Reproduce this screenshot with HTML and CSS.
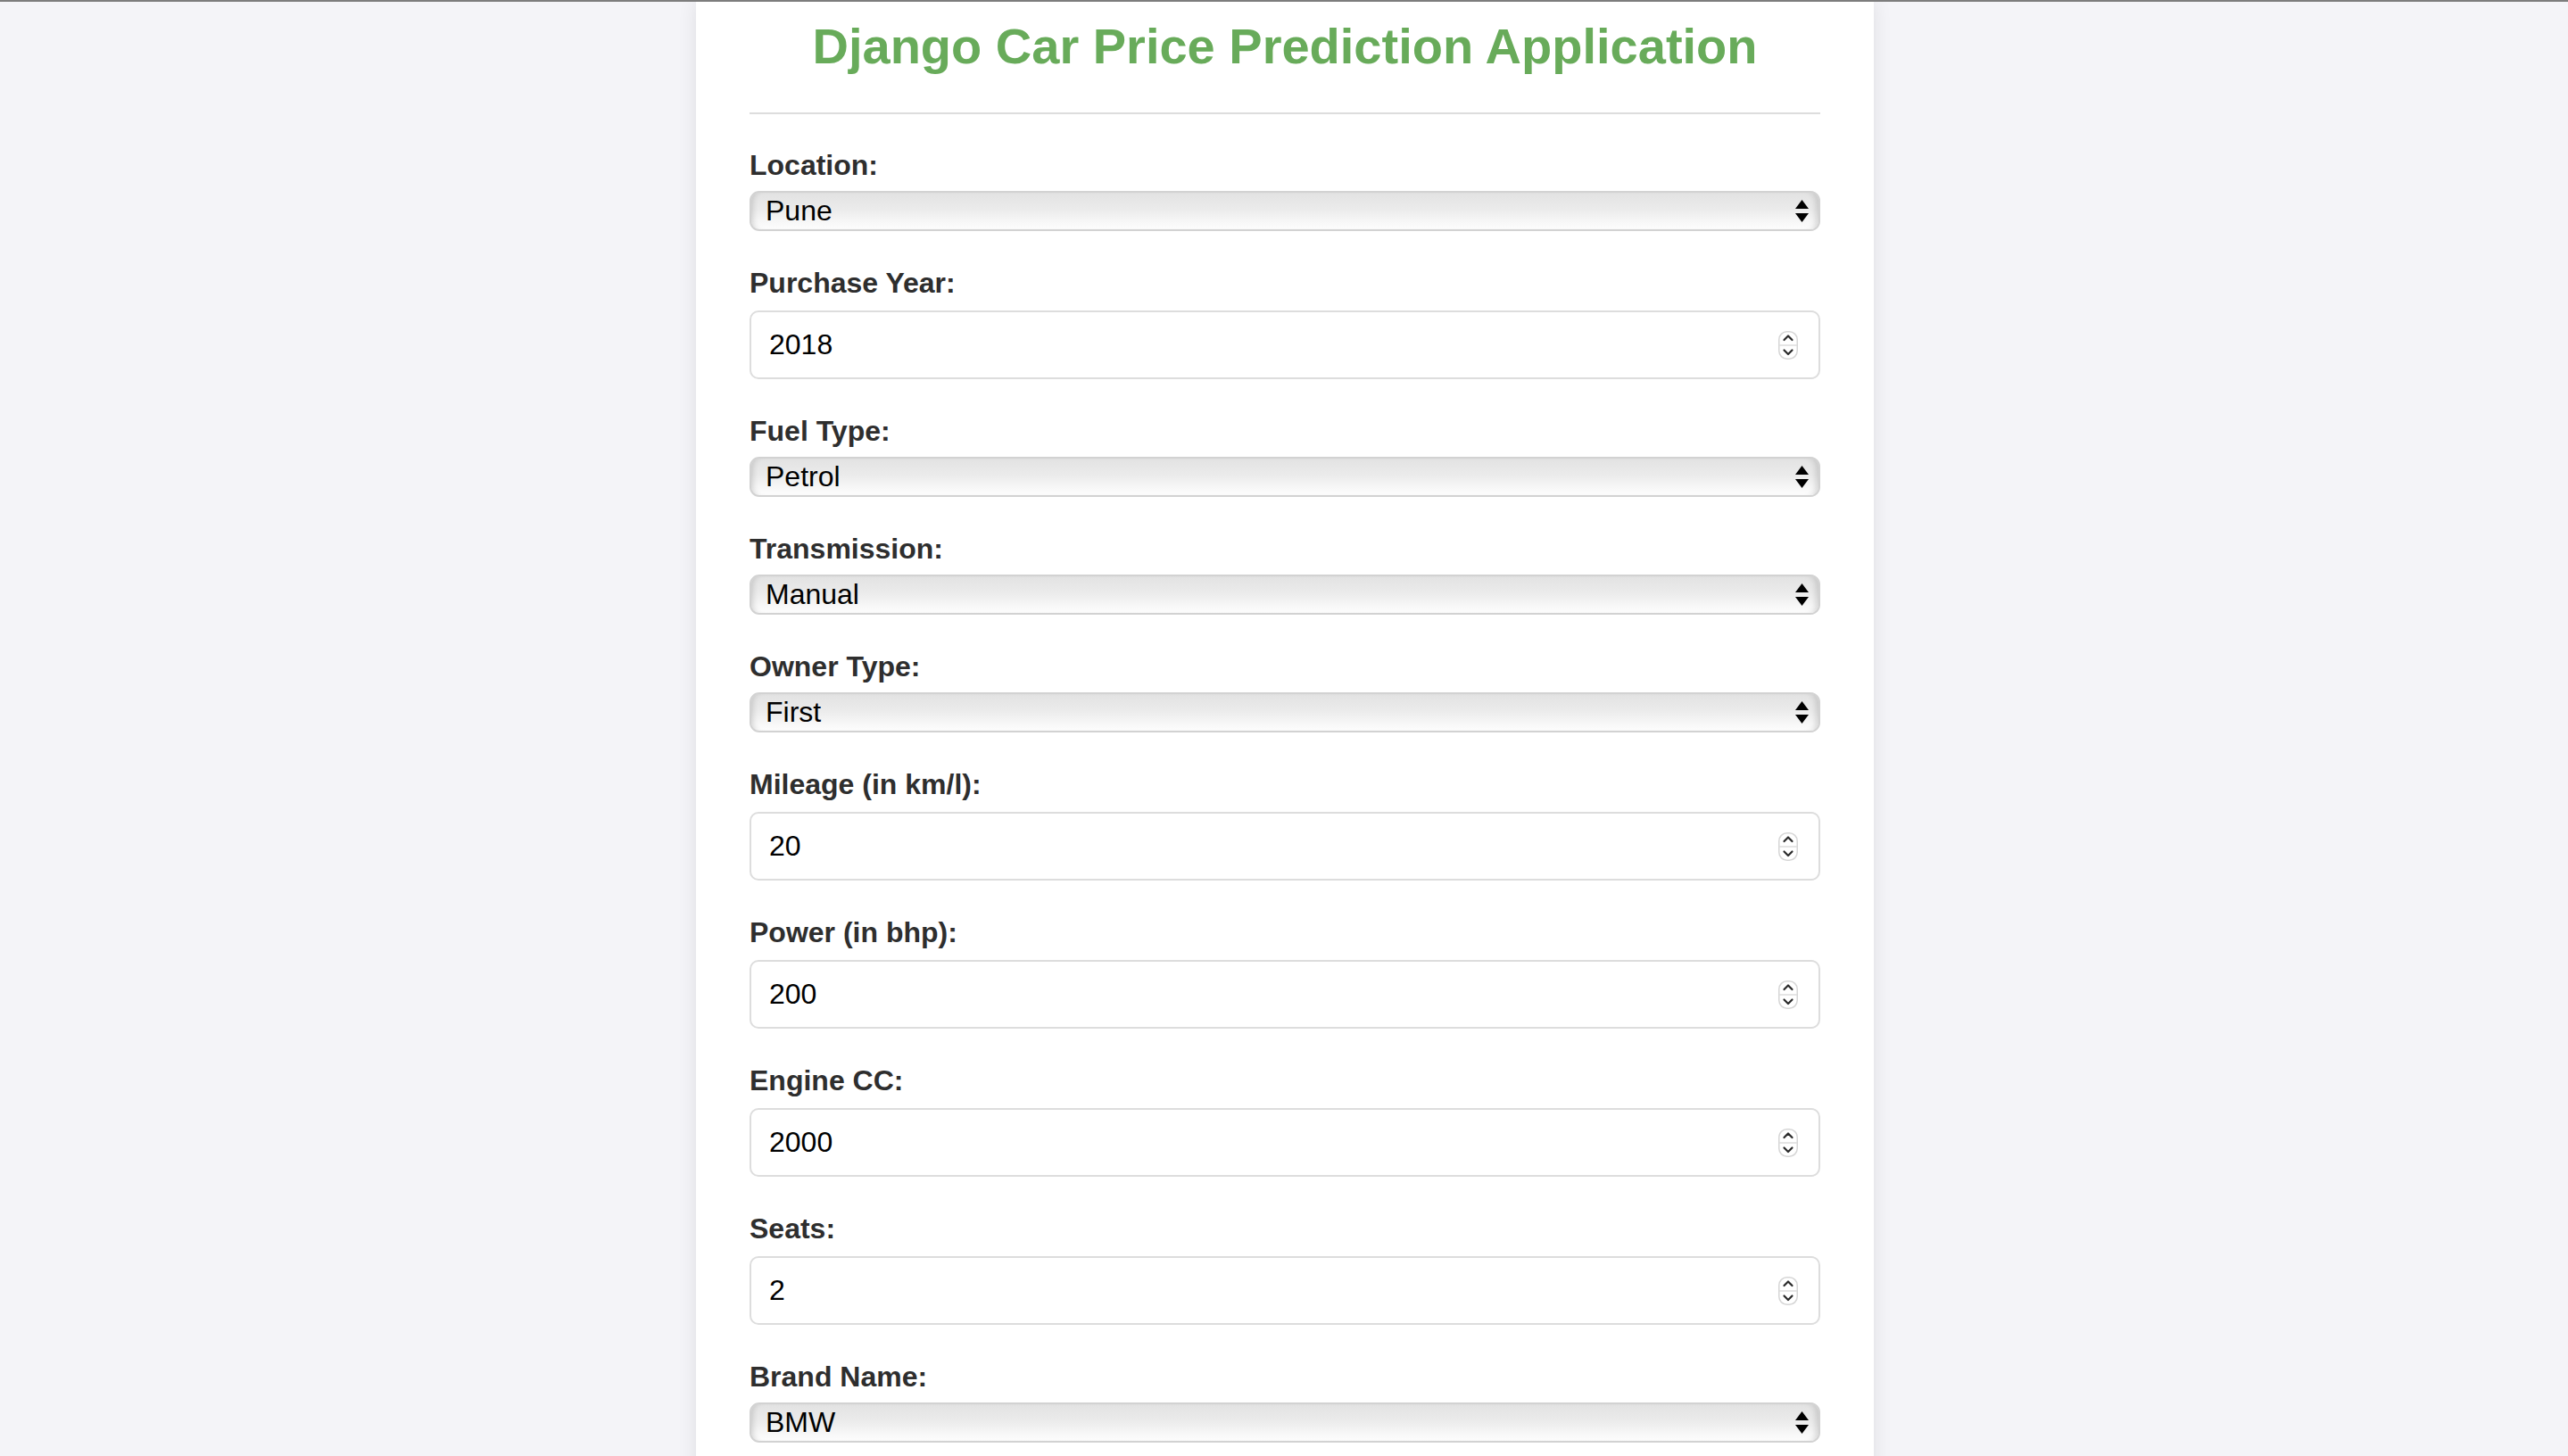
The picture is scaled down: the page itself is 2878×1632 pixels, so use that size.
FILE: index.html
```html
<!DOCTYPE html>
<html lang="en">
<head>
<meta charset="utf-8">
<title>Django Car Price Prediction Application</title>
<link rel="stylesheet" href="styles.css">
</head>
<body>
<div class="container">
  <h1 class="title">Django Car Price Prediction Application</h1>
  <hr class="divider">
  <form class="form">
    <div class="group">
      <label class="label">Location:</label>
      <div class="select"><span class="value">Pune</span><svg class="arrows" width="15" height="25" viewBox="0 0 15 25"><polygon points="7.5,0 15,10 0,10" fill="#000"/><polygon points="0,15 15,15 7.5,25" fill="#000"/></svg></div>
    </div>
    <div class="group">
      <label class="label">Purchase Year:</label>
      <div class="number"><span class="value">2018</span><svg class="spin" width="22" height="32" viewBox="0 0 22 32"><rect x="0.75" y="0.75" width="20.5" height="30.5" rx="9" fill="#fff" stroke="#d6d6d6" stroke-width="1.5"/><line x1="1" y1="16" x2="21" y2="16" stroke="#dcdcdc" stroke-width="1.5"/><path d="M6.5 10 L11 5.5 L15.5 10" fill="none" stroke="#2a2a2a" stroke-width="2.2" stroke-linecap="round" stroke-linejoin="round"/><path d="M6.5 21.5 L11 26 L15.5 21.5" fill="none" stroke="#2a2a2a" stroke-width="2.2" stroke-linecap="round" stroke-linejoin="round"/></svg></div>
    </div>
    <div class="group">
      <label class="label">Fuel Type:</label>
      <div class="select"><span class="value">Petrol</span><svg class="arrows" width="15" height="25" viewBox="0 0 15 25"><polygon points="7.5,0 15,10 0,10" fill="#000"/><polygon points="0,15 15,15 7.5,25" fill="#000"/></svg></div>
    </div>
    <div class="group">
      <label class="label">Transmission:</label>
      <div class="select"><span class="value">Manual</span><svg class="arrows" width="15" height="25" viewBox="0 0 15 25"><polygon points="7.5,0 15,10 0,10" fill="#000"/><polygon points="0,15 15,15 7.5,25" fill="#000"/></svg></div>
    </div>
    <div class="group">
      <label class="label">Owner Type:</label>
      <div class="select"><span class="value">First</span><svg class="arrows" width="15" height="25" viewBox="0 0 15 25"><polygon points="7.5,0 15,10 0,10" fill="#000"/><polygon points="0,15 15,15 7.5,25" fill="#000"/></svg></div>
    </div>
    <div class="group">
      <label class="label">Mileage (in km/l):</label>
      <div class="number"><span class="value">20</span><svg class="spin" width="22" height="32" viewBox="0 0 22 32"><rect x="0.75" y="0.75" width="20.5" height="30.5" rx="9" fill="#fff" stroke="#d6d6d6" stroke-width="1.5"/><line x1="1" y1="16" x2="21" y2="16" stroke="#dcdcdc" stroke-width="1.5"/><path d="M6.5 10 L11 5.5 L15.5 10" fill="none" stroke="#2a2a2a" stroke-width="2.2" stroke-linecap="round" stroke-linejoin="round"/><path d="M6.5 21.5 L11 26 L15.5 21.5" fill="none" stroke="#2a2a2a" stroke-width="2.2" stroke-linecap="round" stroke-linejoin="round"/></svg></div>
    </div>
    <div class="group">
      <label class="label">Power (in bhp):</label>
      <div class="number"><span class="value">200</span><svg class="spin" width="22" height="32" viewBox="0 0 22 32"><rect x="0.75" y="0.75" width="20.5" height="30.5" rx="9" fill="#fff" stroke="#d6d6d6" stroke-width="1.5"/><line x1="1" y1="16" x2="21" y2="16" stroke="#dcdcdc" stroke-width="1.5"/><path d="M6.5 10 L11 5.5 L15.5 10" fill="none" stroke="#2a2a2a" stroke-width="2.2" stroke-linecap="round" stroke-linejoin="round"/><path d="M6.5 21.5 L11 26 L15.5 21.5" fill="none" stroke="#2a2a2a" stroke-width="2.2" stroke-linecap="round" stroke-linejoin="round"/></svg></div>
    </div>
    <div class="group">
      <label class="label">Engine CC:</label>
      <div class="number"><span class="value">2000</span><svg class="spin" width="22" height="32" viewBox="0 0 22 32"><rect x="0.75" y="0.75" width="20.5" height="30.5" rx="9" fill="#fff" stroke="#d6d6d6" stroke-width="1.5"/><line x1="1" y1="16" x2="21" y2="16" stroke="#dcdcdc" stroke-width="1.5"/><path d="M6.5 10 L11 5.5 L15.5 10" fill="none" stroke="#2a2a2a" stroke-width="2.2" stroke-linecap="round" stroke-linejoin="round"/><path d="M6.5 21.5 L11 26 L15.5 21.5" fill="none" stroke="#2a2a2a" stroke-width="2.2" stroke-linecap="round" stroke-linejoin="round"/></svg></div>
    </div>
    <div class="group">
      <label class="label">Seats:</label>
      <div class="number"><span class="value">2</span><svg class="spin" width="22" height="32" viewBox="0 0 22 32"><rect x="0.75" y="0.75" width="20.5" height="30.5" rx="9" fill="#fff" stroke="#d6d6d6" stroke-width="1.5"/><line x1="1" y1="16" x2="21" y2="16" stroke="#dcdcdc" stroke-width="1.5"/><path d="M6.5 10 L11 5.5 L15.5 10" fill="none" stroke="#2a2a2a" stroke-width="2.2" stroke-linecap="round" stroke-linejoin="round"/><path d="M6.5 21.5 L11 26 L15.5 21.5" fill="none" stroke="#2a2a2a" stroke-width="2.2" stroke-linecap="round" stroke-linejoin="round"/></svg></div>
    </div>
    <div class="group">
      <label class="label">Brand Name:</label>
      <div class="select"><span class="value">BMW</span><svg class="arrows" width="15" height="25" viewBox="0 0 15 25"><polygon points="7.5,0 15,10 0,10" fill="#000"/><polygon points="0,15 15,15 7.5,25" fill="#000"/></svg></div>
    </div>
  </form>
</div>
</body>
</html>
```
FILE: styles.css
```css
html, body {
  margin: 0;
  padding: 0;
}
body {
  background: #f4f4f8;
  border-top: 2px solid #7d7d7d;
  padding-left: 2px;
  font-family: "Liberation Sans", Arial, Helvetica, sans-serif;
  min-height: 1630px;
}
.container {
  width: 1320px;
  box-sizing: border-box;
  margin: 0 auto;
  padding: 18px 60px 40px;
  background: #ffffff;
  box-shadow: 0 0 20px rgba(0, 0, 0, 0.09);
  min-height: 1700px;
}
.title {
  margin: 0;
  font-size: 56px;
  line-height: 64px;
  font-weight: bold;
  text-align: center;
  color: #68ab5a;
}
.divider {
  margin: 42px 0 39px;
  border: 0;
  border-top: 2px solid #dddddd;
  height: 0;
}
.form {
  display: flex;
  flex-direction: column;
}
.group {
  display: flex;
  flex-direction: column;
  margin-bottom: 40px;
}
.label {
  display: block;
  font-size: 32px;
  line-height: 37px;
  font-weight: bold;
  color: #2e2e2e;
  margin-bottom: 10px;
}
.select {
  box-sizing: border-box;
  height: 45px;
  display: flex;
  align-items: center;
  justify-content: space-between;
  padding: 0 11px 0 16px;
  border: 2px solid #d2d2d2;
  border-radius: 11px;
  background: linear-gradient(to bottom, #e2e2e2 0%, #ebebeb 45%, #f7f7f7 80%, #fdfdfd 100%);
  box-shadow: inset 7px 0 6px -5px rgba(0, 0, 0, 0.14), inset -8px 0 7px -5px rgba(0, 0, 0, 0.14);
  font-size: 32px;
  color: #000000;
}
.number {
  box-sizing: border-box;
  height: 77px;
  margin-top: 2px;
  display: flex;
  align-items: center;
  justify-content: space-between;
  padding: 0 23px 0 20px;
  border: 2px solid #dddddd;
  border-radius: 10px;
  background: #ffffff;
  font-size: 32px;
  color: #000000;
}
.value {
  line-height: 37px;
}
.arrows, .spin {
  display: block;
  flex: none;
}
```
